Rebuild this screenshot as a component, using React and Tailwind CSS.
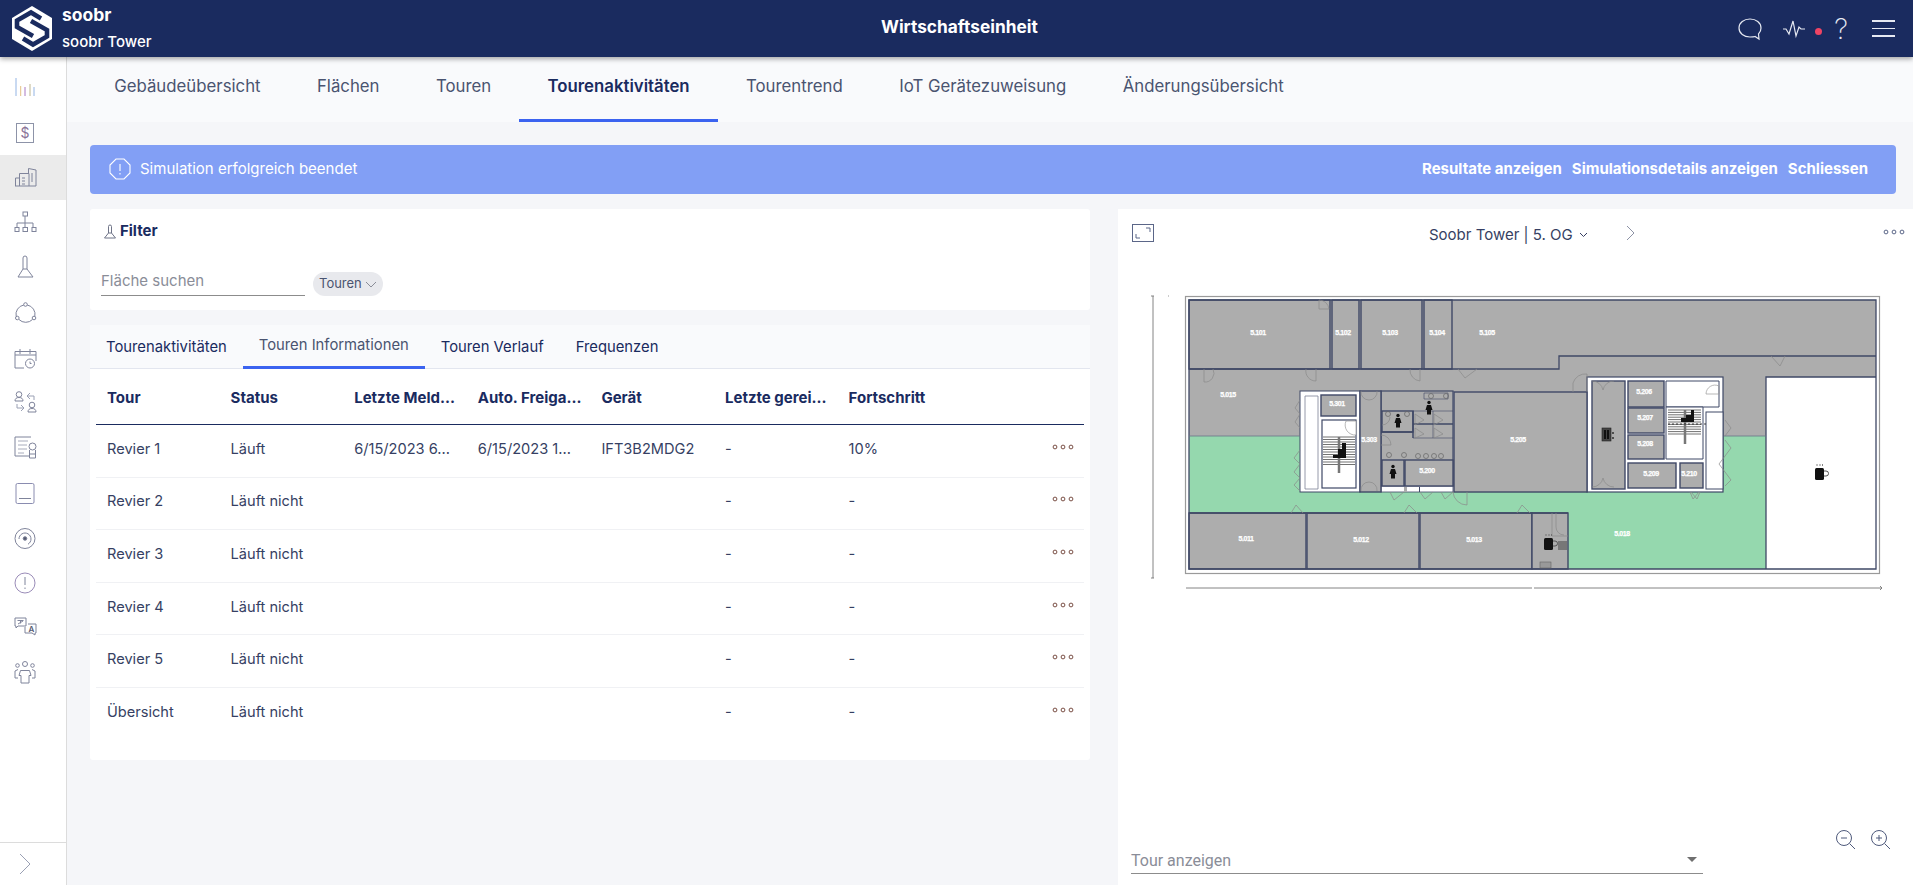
import React from "react";

const Ico = ({ children }) => (
  <svg width="32" height="32" viewBox="0 0 32 32" fill="none" stroke="#7f849b" strokeWidth="1">{children}</svg>
);

const sideIcons = [
  <Ico><path d="M7 6v18" stroke="#93b4e4" /><path d="M11.700 14v10" stroke="#e4c184" /><path d="M16 15v9" stroke="#a878c4" /><path d="M21 12v12" stroke="#bdb590" /><path d="M25 15v9" stroke="#93b4e4" /></Ico>,
  <Ico><rect x="7.500" y="6.500" width="17" height="19" stroke="#8d93a8" /><text x="16" y="21" fontSize="14" textAnchor="middle" fill="#8a7398" stroke="none" fontFamily="Inter">$</text></Ico>,
  <Ico><path d="M6 24h21M6.500 24v-8h4M10.500 24V11.500h9.500V24M19.500 11V6.500l7.500 1.500v16M23 11v9" /><path d="M13 16h3M13 19h3M13 22h3" /></Ico>,
  <Ico><rect x="14" y="5" width="4.500" height="4" /><path d="M16 9v7M8 16h16M8 16v4M16 16v4M24 16v4" /><rect x="6" y="20.500" width="4" height="4" /><rect x="14" y="20.500" width="4.500" height="4" /><rect x="23" y="20.500" width="4" height="4" /></Ico>,
  <Ico><path d="M14 17V6a2 2 0 0 1 4 0v11l6 8H9zM14 17h4" /></Ico>,
  <Ico><circle cx="16.500" cy="7.500" r="1.800" /><circle cx="8.300" cy="21" r="1.800" /><circle cx="25" cy="21" r="1.800" /><path d="M14.800 8A9.500 9.500 0 0 0 7.200 19.500M18.200 8a9.500 9.500 0 0 1 7.600 11.500M10 22.500a9.500 9.500 0 0 0 13.500 0" /></Ico>,
  <Ico><path d="M27 19V9.500H6V26h9" /><path d="M6 13h21M11 7v5M21 7v5" /><circle cx="21" cy="21.500" r="4.500" /><path d="M21 19.500v2h1.500" /></Ico>,
  <Ico><circle cx="10" cy="7.500" r="2.800" /><path d="M6 14c0-2.500 1.500-3.500 4-3.500s4 1 4 3.500z" /><circle cx="23" cy="18" r="2.800" /><path d="M19 25c0-2.500 1.500-3.500 4-3.500s4 1 4 3.500z" /><path d="M18 9l3-3M18 9l3 3M18 9h7v4M8 17v4h7M15 21l-3-3M15 21l-3 3" stroke="#9aa0b4" /></Ico>,
  <Ico><path d="M22 5H6v19h14" /><path d="M9 9h10M9 13h9M9 17h9M9 21h6" stroke="#a8acbc" /><circle cx="23.500" cy="14.500" r="3.500" /><path d="M20.500 18v8h6v-8M20.500 22h6" /></Ico>,
  <Ico><rect x="7" y="6.500" width="18" height="20" rx="1.500" stroke="#8a8cb0" /><path d="M10 21.500h12" /></Ico>,
  <Ico><circle cx="16" cy="16.500" r="10" /><circle cx="16" cy="16.500" r="1.800" fill="#555a70" /><path d="M10 17a6 6 0 1 1 9 5.200" /></Ico>,
  <Ico><circle cx="16" cy="16" r="10" stroke="#9a8cb8" /><path d="M16 10v8M16 20.500v1.500" /></Ico>,
  <Ico><path d="M6 6h11v8H9l-2 2v-2H6zM19 12h8v9h-1v2l-3-2h-7v-6" /><path d="M8.500 8.500h6M11.500 8.500v3M9 12l5-3" /><text x="22.500" y="19.500" fontSize="8" textAnchor="middle" fill="#555a70" stroke="none" fontFamily="Inter" fontWeight="600">A</text></Ico>,
  <Ico><circle cx="16" cy="7" r="2.500" /><circle cx="8.500" cy="8.500" r="1.800" /><circle cx="23.500" cy="8.500" r="1.800" /><path d="M11.500 13.500h9l1.500 5h-2v7.500h-8v-7.500h-2zM6 21v-7l3-1.500M26 21v-7l-3-1.500M6 21h3M26 21h-3" /></Ico>,
];

const Dots = ({ c = "#7a4f45" }) => (
  <svg width="22" height="6" viewBox="0 0 22 6" fill="none" stroke={c} strokeWidth="1">
    <circle cx="3" cy="3" r="1.900" /><circle cx="11" cy="3" r="1.900" /><circle cx="19" cy="3" r="1.900" />
  </svg>
);

const Flask = () => (
  <svg width="14" height="15" viewBox="0 0 14 15" fill="none" stroke="#6f7488" strokeWidth="1">
    <path d="M5.500 9V2.500a1.500 1.500 0 0 1 3 0V9l4 5h-11zM5.500 9h3" />
  </svg>
);

const rows = [
  ["Revier 1", "Läuft", "6/15/2023 6...", "6/15/2023 1...", "IFT3B2MDG2", "-", "10%"],
  ["Revier 2", "Läuft nicht", "", "", "", "-", "-"],
  ["Revier 3", "Läuft nicht", "", "", "", "-", "-"],
  ["Revier 4", "Läuft nicht", "", "", "", "-", "-"],
  ["Revier 5", "Läuft nicht", "", "", "", "-", "-"],
  ["Übersicht", "Läuft nicht", "", "", "", "-", "-"],
];
const heads = ["Tour", "Status", "Letzte Meld...", "Auto. Freiga...", "Gerät", "Letzte gerei...", "Fortschritt"];

const G = "#adadad";
const W = "#3f4866";
const rooms = [
  [1189, 300, 141, 69], [1332, 300, 27, 69], [1361, 300, 61, 69], [1424, 300, 28, 69],
  [1321, 395, 35, 21], [1360, 391, 21, 101], [1382, 411, 31, 21], [1382, 460, 22, 26], [1405, 460, 48, 26],
  [1454, 392, 133, 100], [1592, 381, 33, 108], [1628, 381, 36, 26], [1628, 408, 36, 25], [1628, 435, 36, 24],
  [1628, 463, 48, 25], [1680, 463, 23, 25], [1189, 513, 117, 56], [1307, 513, 112, 56], [1420, 513, 112, 56], [1532, 513, 36, 56],
];
const labels = [
  ["5.101", 1258, 333], ["5.102", 1343, 333], ["5.103", 1390, 333], ["5.104", 1437, 333], ["5.105", 1487, 333],
  ["5.015", 1228, 395], ["5.301", 1337, 404], ["5.303", 1369, 440], ["5.205", 1518, 440], ["5.200", 1427, 471],
  ["5.206", 1644, 392], ["5.207", 1645, 418], ["5.208", 1645, 444], ["5.209", 1651, 474], ["5.210", 1689, 474],
  ["5.011", 1246, 539], ["5.012", 1361, 540], ["5.013", 1474, 540], ["5.018", 1622, 534],
];
const doors = [
  "M1319 309v-9M1319 309h10M1319 300a10 10 0 0 1 10 9", "M1204 369v13a9 9 0 0 0 9-13", "M1316 369v12a10 10 0 0 1-10-12",
  "M1420 369v12a11 11 0 0 1-10-12", "M1458 369l7 9 12-9", "M1573 392v-9a13 13 0 0 1 14-9v18", "M1377 391a8 8 0 0 1-8 9 8 8 0 0 1-8-9",
  "M1361 491a8 8 0 0 1 8-9 8 8 0 0 1 8 9", "M1300 400l-5 8 5 6-5 8 5 6", "M1300 450l-6 8 6 6-6 8 6 6-6 7 6 6", "M1390 492l4 8 10-8M1420 492l5 7 8-7M1441 492l4 7 8-7",
  "M1467 492v13a14 14 0 0 1-14-13", "M1291 513l5-8 7 8M1404 513l5-8 8 8M1517 513l5-8 8 8", "M1725 420l6 8-6 8M1725 440l6 8-6 8-6 8 6 8 6 8-6 6", "M1690 492l3 7 6-7M1700 492l-3 7-6-7",
  "M1771 356l9 10 5-10", "M1592 381a11 11 0 0 1 11 9 11 11 0 0 1 11-9M1592 487a11 11 0 0 0 11-9 11 11 0 0 0 11 9",
  "M1552 513v23h16M1556 513v14a8 8 0 0 0 8 8", "M1382 425a8 8 0 0 0 8-8M1381 435a10 10 0 0 1 10 10h-10",
  "M1415 414l9 6-9 5zM1434 414l9 6-9 5zM1415 428l9 6-9 4zM1434 428l9 6-9 4z",
];

const Person = ({ x, y }) => (
  <g fill="#111">
    <circle cx={x} cy={y - 5.500} r="1.700" />
    <path d={`M${x - 2} ${y - 3}h4l1.500 5h-1.500v4.500h-4v-4.500h-1.500z`} />
  </g>
);
const Mug = ({ x, y }) => (
  <g>
    <rect x={x - 5} y={y - 5} width="9" height="12" rx="1.500" fill="#111" />
    <path d={`M${x + 4} ${y - 2}h2a2 2 0 0 1 0 5h-2`} fill="none" stroke="#555" strokeWidth="1" />
    <path d={`M${x - 3} ${y - 9}v2M${x} ${y - 9}v2M${x + 2.500} ${y - 9}v2`} stroke="#666" strokeWidth=".8" />
  </g>
);
const Stairs = ({ x, y, w, n, gap }) => (
  <g stroke="#333" strokeWidth=".7">
    {Array.from({ length: n }, (_, i) => <path key={i} d={`M${x} ${y + i * gap}h${w}`} />)}
  </g>
);

function FloorPlan() {
  return (
    <svg viewBox="1118 290 795 305" width="795" height="305" className="block">
      <rect x="1185.500" y="296.500" width="694" height="277" fill="#fff" stroke="#9a9a9a" strokeWidth="1.200" />
      <path d="M1189 300h687v77h-110v59h-43V377h-136v15h-134v-1h-153v45h-111z" fill={G} />
      <path d="M1189 436h111v56h466v77h-198v-56h-379z" fill="#95d8ae" />
      <rect x="1766" y="377" width="110" height="192" fill="#fff" />
      <path d="M1723 436h43v56h-43zM1300 492h466v21h-466zM1189 436h111v77h-111z" fill="#95d8ae" />
      <rect x="1300" y="391" width="60" height="101" fill="#fff" stroke={W} strokeWidth="1" />
      <rect x="1381" y="391" width="72" height="95" fill={G} stroke={W} strokeWidth="1.200" />
      <rect x="1381" y="486" width="72" height="6" fill="#fff" stroke={W} strokeWidth=".8" />
      <rect x="1404" y="487" width="3" height="5" fill={G} />
      <rect x="1419" y="487" width="1" height="5" fill={W} />
      <rect x="1587" y="377" width="136" height="115" fill="#fff" stroke={W} strokeWidth="1.200" />
      {rooms.map(([x, y, w, h], i) => (
        <rect key={i} x={x} y={y} width={w} height={h} fill={G} stroke={W} strokeWidth="1.400" />
      ))}
      <path d="M1189 369h370v-13h317M1189 300h687v269h-687zM1766 569V377h110M1568 513h-379" fill="none" stroke={W} strokeWidth="1.300" />
      <path d="M1189 436h111M1723 436h43" stroke="#6b7388" strokeWidth=".8" />
      <path d="M1305 396h13v93h-13z" fill="#fff" stroke="#7b8296" strokeWidth=".8" />
      <rect x="1322" y="420" width="34" height="68" fill="#fff" stroke={W} strokeWidth="1.200" />
      <Stairs x={1323} y={437} w={32} n={12} gap={2.500} />
      <path d="M1339 437v36" stroke="#777" strokeWidth="2.500" />
      <path d="M1333 459v-4h5v-6h4v-6h4v15h-13z" fill="#111" />
      <path d="M1356 421h-10a10 10 0 0 0 10 14z" fill="#fff" stroke="#999" strokeWidth=".7" />
      <path d="M1666 381h53v26h-53z" fill="#fff" stroke={W} strokeWidth="1" />
      <path d="M1666 407h37v52h-37z" fill="#fff" stroke={W} strokeWidth="1" />
      <rect x="1706" y="412" width="17" height="77" fill="#fff" stroke={W} strokeWidth="1" />
      <Stairs x={1668} y={410} w={33} n={11} gap={2.400} />
      <path d="M1685 410v34" stroke="#777" strokeWidth="2.500" />
      <path d="M1681 422v-4h5v-3h5v-5h3v12z" fill="#111" />
      <path d="M1668 424h40" stroke="#111" strokeWidth=".8" strokeDasharray="2 2" />
      <path d="M1719 394h-13a9 9 0 0 1 13-8z" fill="none" stroke="#999" strokeWidth=".7" />
      <path d="M1413 411v27" stroke={W} strokeWidth="1.500" fill="none" />
      <path d="M1413 424h40M1381 432h32" stroke={W} strokeWidth="1.400" fill="none" />
      <path d="M1413 411h40M1433 411v27M1413 438h40M1424 393h24v6h-24z" stroke={W} strokeWidth=".6" fill="none" />
      {[[1388, 414], [1407, 414], [1431, 396], [1446, 396], [1389, 455], [1404, 455], [1418, 456], [1426, 456], [1434, 456], [1441, 456]].map(([x, y], i) => (
        <circle key={i} cx={x} cy={y} r="2.500" fill="none" stroke="#666" strokeWidth=".7" />
      ))}
      {doors.map((d, i) => <path key={i} d={d} fill="none" stroke="#8a8a8a" strokeWidth=".7" />)}
      <Person x={1429} y={408} /><Person x={1398} y={421} /><Person x={1393} y={472} />
      <rect x="1602" y="428" width="9" height="13" fill="#444" stroke="#222" strokeWidth=".6" />
      <rect x="1604" y="430" width="2" height="9" fill="#111" /><rect x="1607" y="430" width="2" height="9" fill="#111" />
      <path d="M1613 432v2M1613 437v2" stroke="#111" strokeWidth="1.200" />
      <Mug x={1820} y={473} /><Mug x={1549} y={543} />
      <rect x="1558" y="541" width="9" height="9" fill="#777" />
      <rect x="1540" y="562" width="11" height="6" fill="#999" stroke="#666" strokeWidth=".6" />
      {labels.map(([t, x, y]) => (
        <text key={t} x={x} y={y} fill="#fff" stroke="#fff" strokeWidth=".25" fontSize="7" letterSpacing="-.45" fontWeight="700" textAnchor="middle" dominantBaseline="middle" fontFamily="Liberation Sans, sans-serif">{t}</text>
      ))}
      <path d="M1153 296v282M1151 296h3M1151 578h3M1186 588h696M1880 586l2 2-2 2" stroke="#777" strokeWidth=".9" fill="none" />
      <path d="M1533 585v6" stroke="#fff" strokeWidth="2" />
      <path d="M1168 296h1" stroke="#999" strokeWidth="1" />
    </svg>
  );
}

export default function App() {
  return (
    <div className="h-[885px] w-[1913px] overflow-hidden flex flex-col bg-[#f5f6f9] text-[#1a2b5f] font-['Inter',sans-serif]">
      <header className="relative z-10 h-[57px] shrink-0 bg-[#1a2b5f] text-white flex items-center shadow-[0_2px_5px_rgba(0,0,0,0.35)]">
        <svg width="40" height="45" viewBox="0 0 40 45" className="ml-[12px] shrink-0">
          <path d="M20 0l20 12v21L20 45 0 33V12z" fill="#fff" />
          <path d="M29 12.500L19 6.500 5 14.500v6.500l16 9" fill="none" stroke="#1a2b5f" strokeWidth="4.600" />
          <path d="M11 32.500l10 6 14-8v-6.500l-16-9" fill="none" stroke="#1a2b5f" strokeWidth="4.600" />
        </svg>
        <div className="ml-[10px] flex flex-col">
          <span className="text-[17.500px] font-bold leading-[20px]">soobr</span>
          <span className="text-[15px] leading-[20px] mt-[7px] font-medium">soobr Tower</span>
        </div>
        <div className="absolute left-[881px] top-[16px] text-[17.300px] leading-[22px] font-bold">Wirtschaftseinheit</div>
        <div className="ml-auto flex items-center pr-[18px]">
          <svg width="26" height="26" viewBox="0 0 26 26" fill="none" stroke="#e6e9f2" strokeWidth="1.200">
            <path d="M13 3c6 0 11 3.500 11 9 0 2.500-1 4.500-2.500 6l.5 5-4-2.500c-1.500.5-3 .5-5 .5-6 0-11-3.500-11-9s5-9 11-9z" />
          </svg>
          <svg width="24" height="20" viewBox="0 0 24 20" fill="none" stroke="#e6e9f2" strokeWidth="1.200" className="ml-[19px]">
            <path d="M1 10h3l3 5 4-13 3 15 3-9 2 2h4" />
          </svg>
          <span className="ml-[9px] mt-[6px] size-[7px] rounded-full bg-[#ef4464]" />
          <span className="ml-[12px] text-[28px] leading-none font-extralight text-[#e6e9f2]">?</span>
          <div className="ml-[24px] w-[23px] flex flex-col gap-[6px]">
            <span className="block h-[1.500px] bg-[#e6e9f2]" />
            <span className="block h-[1.500px] bg-[#e6e9f2]" />
            <span className="block h-[1.500px] bg-[#e6e9f2]" />
          </div>
        </div>
      </header>

      <div className="flex flex-1 min-h-0">
        <aside className="w-[67px] shrink-0 bg-white border-r border-[#dcdcdc] flex flex-col">
          <div className="flex flex-col pt-[8px] flex-1">
            {sideIcons.map((ic, i) => (
              <div key={i} className={`h-[45px] shrink-0 pl-[9px] flex items-center ${i === 2 ? "bg-[#ebebeb]" : ""}`}>{ic}</div>
            ))}
          </div>
          <div className="h-[43px] border-t border-[#dcdcdc] pl-[19px] flex items-center">
            <svg width="13" height="22" viewBox="0 0 13 22" fill="none" stroke="#9aa0b4" strokeWidth="1"><path d="M1 1l10 10L1 21" /></svg>
          </div>
        </aside>

        <main className="flex-1 min-w-0 flex flex-col">
          <nav className="h-[65px] shrink-0 bg-[#f9fafc] flex pl-[19px] text-[16.800px] text-[#4a5470]">
            {["Gebäudeübersicht", "Flächen", "Touren", "Tourenaktivitäten", "Tourentrend", "IoT Gerätezuweisung", "Änderungsübersicht"].map((t, i) => (
              <div key={t} className={`px-[28.200px] pb-[2px] flex items-center border-b-[3px] whitespace-nowrap ${i === 3 ? "border-[#3b63f0] font-semibold text-[#1a2b5f]" : "border-transparent"}`}>{t}</div>
            ))}
          </nav>

          <div className="flex-1 min-h-0 pl-[23px] flex flex-col pt-[23px]">
            <div className="h-[49px] mr-[17px] rounded-[4px] bg-[#829ff5] text-white flex items-center pl-[19px] pr-[28px] text-[15px] pb-[1px]">
              <svg width="22" height="22" viewBox="0 0 22 22" fill="none" stroke="#fff" strokeWidth="1.100">
                <path d="M7 1h8l6 6v8l-6 6H7l-6-6V7zM11 6v7M11 15v1.500" />
              </svg>
              <span className="ml-[9px]">Simulation erfolgreich beendet</span>
              <div className="ml-auto flex gap-[10px] font-bold">
                <span>Resultate anzeigen</span>
                <span>Simulationsdetails anzeigen</span>
                <span>Schliessen</span>
              </div>
            </div>

            <div className="flex flex-1 min-h-0 mt-[15px] gap-[28px]">
              <div className="w-[1000px] shrink-0 flex flex-col">
                <section className="h-[101px] bg-white rounded-[3px] px-[11px] pt-[12px]">
                  <div className="flex items-center pl-[2px] gap-[3px]">
                    <Flask />
                    <span className="text-[15px] leading-[20px] font-bold">Filter</span>
                  </div>
                  <div className="flex items-start mt-[28px]">
                    <div className="w-[204px] h-[27px] border-b border-[#8c8c8c] text-[15px] leading-[24px] text-[#8a8d98]">Fläche suchen</div>
                    <div className="ml-[8px] mt-[3px] w-[70px] h-[24px] rounded-full bg-[#e8e9ed] text-[13px] text-[#4a5470] flex items-center pl-[6px] gap-[3px]">
                      Touren
                      <svg width="12" height="7" viewBox="0 0 12 7" fill="none" stroke="#8a8d98" strokeWidth="1"><path d="M1 1l5 5 5-5" /></svg>
                    </div>
                  </div>
                </section>

                <section className="mt-[15px] h-[435px] bg-white rounded-[3px] flex flex-col">
                  <div className="h-[44px] shrink-0 bg-[#f9fafc] border-b border-[#e3e6ef] flex text-[14.800px]">
                    {["Tourenaktivitäten", "Touren Informationen", "Touren Verlauf", "Frequenzen"].map((t, i) => (
                      <div key={t} className={`px-[16px] flex items-center whitespace-nowrap ${i === 1 ? "border-b-[3px] border-[#3b63f0] -mb-px text-[#4a5470]" : "pt-[2px]"}`}>{t}</div>
                    ))}
                  </div>
                  <div className="px-[6px] flex flex-col">
                    <div className="h-[56px] pt-[3px] border-b-[1.500px] border-[#1a2b5f] flex items-center pl-[11px] text-[15px] font-bold">
                      {heads.map((h) => (
                        <div key={h} className="w-[123.600px] shrink-0 whitespace-nowrap">{h}</div>
                      ))}
                    </div>
                    {rows.map((r, i) => (
                      <div key={r[0]} className={`h-[52.600px] pb-[2px] flex items-center pl-[11px] text-[14.600px] text-[#363f63] ${i < 5 ? "border-b border-[#f0f1f4]" : ""}`}>
                        {r.map((c, j) => (
                          <div key={j} className="w-[123.600px] shrink-0 whitespace-nowrap">{c}</div>
                        ))}
                        <div className="ml-auto mr-[10px] -mt-[6px]"><Dots /></div>
                      </div>
                    ))}
                  </div>
                </section>
              </div>

              <section className="flex-1 bg-white relative flex flex-col min-w-0">
                <div className="relative h-[50px] shrink-0 flex items-start">
                  <svg width="22" height="18" viewBox="0 0 22 18" fill="none" stroke="#5b6688" strokeWidth="1" className="ml-[14px] mt-[15px]">
                    <rect x=".5" y=".5" width="21" height="17" />
                    <path d="M4 10v4h4M14 4h4v4" />
                  </svg>
                  <div className="ml-[275px] mt-[16px] flex items-center text-[15px] leading-[20px] text-[#363f63]">
                    Soobr Tower | 5. OG
                    <svg width="9" height="6" viewBox="0 0 9 6" fill="none" stroke="#363f63" strokeWidth="1" className="ml-[6px]"><path d="M1 1l3.500 3.500L8 1" /></svg>
                  </div>
                  <svg width="10" height="16" viewBox="0 0 10 16" fill="none" stroke="#8d92a5" strokeWidth="1" className="ml-[38px] mt-[16px]"><path d="M1 1l7 7-7 7" /></svg>
                  <div className="absolute right-[8px] top-[20px]"><Dots c="#5b6688" /></div>
                </div>
                <div className="mt-[31px]"><FloorPlan /></div>
                <div className="absolute left-[13px] top-[638px] w-[572px] h-[27px] border-b border-[#8c8c8c] text-[16px] leading-[28px] text-[#8a8d98] font-['Roboto',sans-serif]">
                  Tour anzeigen
                  <span className="absolute right-[6px] top-[10px] border-x-[5px] border-x-transparent border-t-[5px] border-t-[#6f6f6f]" />
                </div>
                <div className="absolute right-[22px] top-[620px] flex gap-[14px]">
                  {["M6 9h6", "M6 9h6M9 6v6"].map((d) => (
                    <svg key={d} width="21" height="21" viewBox="0 0 21 21" fill="none" stroke="#4f5a7c" strokeWidth="1"><circle cx="9" cy="9" r="7.500" /><path d={d} /><path d="M14.500 14.500L20 20" /></svg>
                  ))}
                </div>
              </section>
            </div>
          </div>
        </main>
      </div>
    </div>
  );
}
